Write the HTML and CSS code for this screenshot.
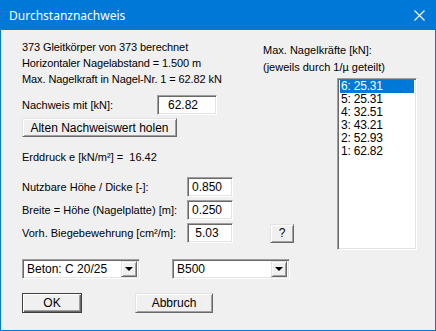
FILE: index.html
```html
<!DOCTYPE html>
<html lang="de">
<head>
    <meta charset="UTF-8">
    <title>Durchstanznachweis</title>
    <link rel="stylesheet" href="styles.css">
</head>
<body>
    <div class="window">
        <div class="titlebar">
            <span class="title">Durchstanznachweis</span>
            <svg class="close" width="11" height="11" viewBox="0 0 11 11">
                <path d="M0.5 0.5 L10.5 10.5 M10.5 0.5 L0.5 10.5" stroke="#fff" stroke-width="1.1" fill="none"/>
            </svg>
        </div>
        <div class="dialog">
            <div class="main">
                <div class="left">
                    <div class="info">
                        <div>373 Gleitkörper von 373 berechnet</div>
                        <div>Horizontaler Nagelabstand = 1.500 m</div>
                        <div>Max. Nagelkraft in Nagel-Nr. 1 = 62.82 kN</div>
                    </div>
                    <div class="row nachweis">
                        <label class="lbl-short">Nachweis mit [kN]:</label>
                        <input class="field wide" type="text" value="62.82">
                    </div>
                    <button class="btn btn-old">Alten Nachweiswert holen</button>
                    <div class="erddruck">Erddruck e [kN/m²] =&nbsp; 16.42</div>
                    <div class="fields">
                        <div class="row">
                            <label class="lbl">Nutzbare Höhe / Dicke [-]:</label>
                            <input class="field small" type="text" value="0.850">
                        </div>
                        <div class="row">
                            <label class="lbl">Breite = Höhe (Nagelplatte) [m]:</label>
                            <input class="field small" type="text" value="0.250">
                        </div>
                        <div class="row">
                            <label class="lbl">Vorh. Biegebewehrung [cm²/m]:</label>
                            <input class="field small" type="text" value="5.03">
                            <button class="btn btn-help">?</button>
                        </div>
                    </div>
                </div>
                <div class="right-head">
                    <div>Max. Nagelkräfte [kN]:</div>
                    <div>(jeweils durch 1/µ geteilt)</div>
                </div>
                <div class="listbox">
                    <div class="item selected">6: 25.31</div>
                    <div class="item">5: 25.31</div>
                    <div class="item">4: 32.51</div>
                    <div class="item">3: 43.21</div>
                    <div class="item">2: 52.93</div>
                    <div class="item">1: 62.82</div>
                </div>
            </div>
            <div class="combos">
                <div class="combo beton">
                    <span class="combo-text">Beton: C 20/25</span>
                    <span class="combo-arrow"></span>
                </div>
                <div class="combo steel">
                    <span class="combo-text">B500</span>
                    <span class="combo-arrow"></span>
                </div>
            </div>
            <div class="actions">
                <button class="btn btn-ok">OK</button>
                <button class="btn btn-cancel">Abbruch</button>
            </div>
        </div>
    </div>
</body>
</html>
```

FILE: styles.css
```css
body {
    margin: 0;
    font-family: "Liberation Sans", Arial, sans-serif;
    font-size: 11px;
    color: #000;
    background: #fff;
}
.window {
    width: 434px;
    height: 330px;
    padding: 0 1px 1px 1px;
    background: #0078d7;
    display: flex;
    flex-direction: column;
}
.titlebar {
    height: 30px;
    display: flex;
    align-items: center;
    justify-content: space-between;
    padding: 0 10px 0 8px;
    color: #fff;
}
.title {
    font-family: "Noto Sans", "Open Sans", sans-serif;
    font-size: 12px;
}
.dialog {
    flex: 1;
    background: #f0f0f0;
    padding: 9px 0 0 21px;
}
.main {
    display: grid;
    grid-template-columns: 241px 74px 80px;
    grid-template-rows: 39px 172px;
}
.left {
    grid-column: 1 / 3;
    grid-row: 1 / 3;
}
.info div,
.erddruck,
.right-head div {
    height: 16px;
    line-height: 16px;
    white-space: nowrap;
}
.info div {
    letter-spacing: -0.1px;
}
.row {
    display: flex;
    align-items: center;
    height: 20px;
}
.nachweis {
    margin-top: 8px;
}
.lbl-short {
    width: 135px;
}
.lbl {
    width: 165px;
}
.field {
    box-sizing: border-box;
    height: 20px;
    margin: 0;
    font: inherit;
    font-size: 12px;
    text-align: center;
    background: #fff;
    border: 1px solid;
    border-color: #a0a0a0 #fff #fff #a0a0a0;
    box-shadow: inset 1px 1px #696969, inset -1px -1px #e3e3e3;
    outline: none;
}
.field.wide {
    width: 60px;
    padding: 0 8px 0 0;
}
.field.small {
    width: 46px;
    padding: 0 6px 0 0;
}
.fields {
    margin-top: 12px;
    display: flex;
    flex-direction: column;
    gap: 3px;
}
.btn {
    box-sizing: border-box;
    margin: 0;
    padding: 0;
    font: inherit;
    font-size: 12px;
    color: #000;
    background: #f0f0f0;
    border: 1px solid;
    border-color: #e3e3e3 #696969 #696969 #e3e3e3;
    box-shadow: inset 1px 1px #fff, inset -1px -1px #a0a0a0;
    height: 20px;
}
.btn-old {
    display: block;
    width: 155px;
    height: 19px;
    margin-top: 3px;
}
.erddruck {
    margin-top: 12px;
}
.btn-help {
    width: 24px;
    height: 19px;
    margin-left: 37px;
}
.right-head {
    grid-column: 2 / 4;
    grid-row: 1;
    padding-top: 3px;
}
.right-head div + div {
    margin-top: 1px;
}
.listbox {
    grid-column: 3;
    grid-row: 2;
    box-sizing: border-box;
    background: #fff;
    border: 1px solid;
    border-color: #a0a0a0 #fff #fff #a0a0a0;
    box-shadow: inset 1px 1px #696969, inset -1px -1px #e3e3e3;
    padding: 1px 2px 2px 2px;
    font-size: 12px;
    letter-spacing: -0.2px;
}
.item {
    height: 13px;
    line-height: 13px;
    padding-left: 1px;
    overflow: hidden;
}
.selected {
    background: #0078d7;
    color: #fff;
}
.combos {
    margin-top: 9px;
    display: flex;
    gap: 32px;
}
.combo {
    box-sizing: border-box;
    width: 118px;
    height: 20px;
    display: flex;
    align-items: center;
    justify-content: space-between;
    padding: 2px;
    background: #fff;
    border: 1px solid;
    border-color: #a0a0a0 #fff #fff #a0a0a0;
    box-shadow: inset 1px 1px #696969, inset -1px -1px #e3e3e3;
    font-size: 12px;
}
.combo-text {
    padding-left: 2px;
}
.combo-arrow {
    box-sizing: border-box;
    width: 16px;
    height: 16px;
    background: #f0f0f0;
    border: 1px solid;
    border-color: #e3e3e3 #696969 #696969 #e3e3e3;
    box-shadow: inset 1px 1px #fff, inset -1px -1px #a0a0a0;
    display: flex;
    align-items: center;
    justify-content: center;
}
.combo-arrow::after {
    content: "";
    border-left: 4px solid transparent;
    border-right: 4px solid transparent;
    border-top: 4px solid #000;
}
.actions {
    margin-top: 14px;
    display: flex;
    gap: 53px;
}
.btn-ok {
    width: 60px;
    border-color: #404040;
    box-shadow: inset 1px 1px #fff, inset -1px -1px #696969, inset -2px -2px #a0a0a0;
}
.btn-cancel {
    width: 78px;
}
```
